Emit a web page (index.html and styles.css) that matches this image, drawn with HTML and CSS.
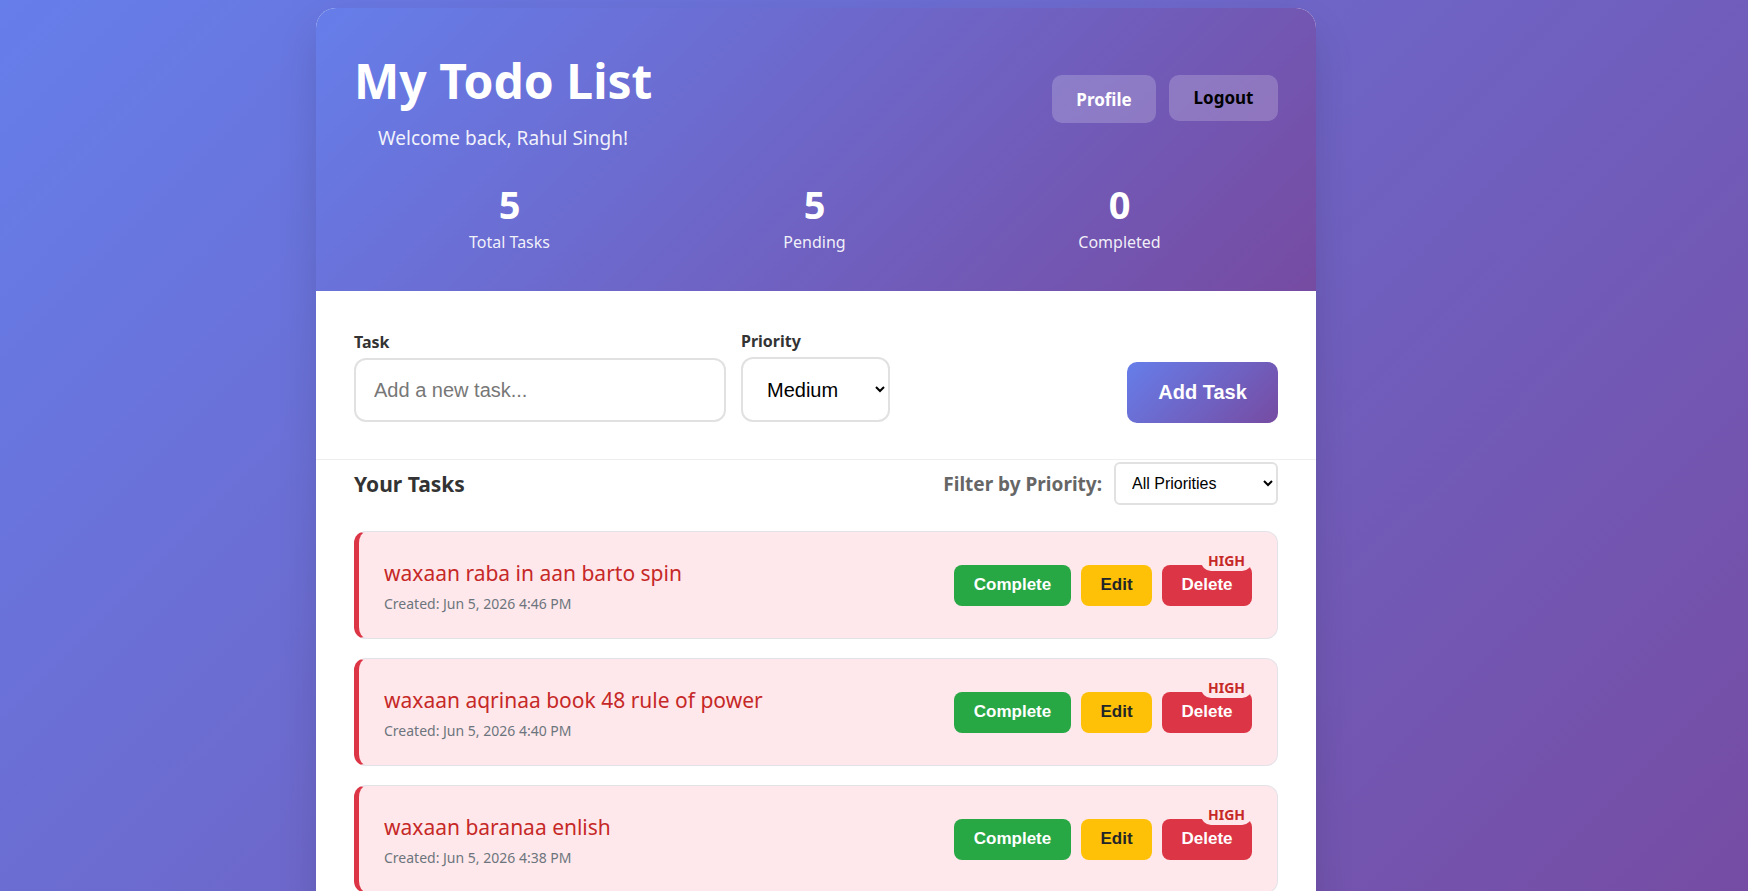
FILE: index.html
```html
<!DOCTYPE html>
<html lang="en">
<head>
    <meta charset="UTF-8">
    <meta name="viewport" content="width=device-width, initial-scale=1.0">
    <title>My Todo List</title>
    <link rel="stylesheet" href="styles.css">
</head>
<body>
    <div class="container">
        <header class="header">
            <div class="header-top">
                <div class="title-block">
                    <h1>My Todo List</h1>
                    <p class="welcome">Welcome back, Rahul Singh!</p>
                </div>
                <div class="header-actions">
                    <a href="#" class="profile-btn">Profile</a>
                    <button class="logout-btn">Logout</button>
                </div>
            </div>
            <div class="stats">
                <div class="stat">
                    <div class="stat-number">5</div>
                    <div class="stat-label">Total Tasks</div>
                </div>
                <div class="stat">
                    <div class="stat-number">5</div>
                    <div class="stat-label">Pending</div>
                </div>
                <div class="stat">
                    <div class="stat-number">0</div>
                    <div class="stat-label">Completed</div>
                </div>
            </div>
        </header>

        <form class="add-form" onsubmit="event.preventDefault();">
            <div class="form-group task-group">
                <label for="taskInput">Task</label>
                <input type="text" id="taskInput" placeholder="Add a new task...">
            </div>
            <div class="form-group">
                <label for="prioritySelect">Priority</label>
                <select id="prioritySelect" class="priority-select">
                    <option value="low">Low</option>
                    <option value="medium" selected>Medium</option>
                    <option value="high">High</option>
                </select>
            </div>
            <button type="submit" class="add-btn">Add Task</button>
        </form>

        <section class="tasks-section">
            <div class="tasks-header">
                <h2>Your Tasks</h2>
                <div class="filter">
                    <label for="filterSelect">Filter by Priority:</label>
                    <select id="filterSelect" class="filter-select">
                        <option value="all">All Priorities</option>
                        <option value="high">High</option>
                        <option value="medium">Medium</option>
                        <option value="low">Low</option>
                    </select>
                </div>
            </div>

            <div class="task-item high">
                <span class="priority-badge">HIGH</span>
                <div class="task-info">
                    <div class="task-text">waxaan raba in aan barto spin</div>
                    <div class="task-date">Created: Jun 5, 2026 4:46 PM</div>
                </div>
                <div class="task-actions">
                    <button class="btn complete-btn">Complete</button>
                    <button class="btn edit-btn">Edit</button>
                    <button class="btn delete-btn">Delete</button>
                </div>
            </div>

            <div class="task-item high">
                <span class="priority-badge">HIGH</span>
                <div class="task-info">
                    <div class="task-text">waxaan aqrinaa book 48 rule of power</div>
                    <div class="task-date">Created: Jun 5, 2026 4:40 PM</div>
                </div>
                <div class="task-actions">
                    <button class="btn complete-btn">Complete</button>
                    <button class="btn edit-btn">Edit</button>
                    <button class="btn delete-btn">Delete</button>
                </div>
            </div>

            <div class="task-item high">
                <span class="priority-badge">HIGH</span>
                <div class="task-info">
                    <div class="task-text">waxaan baranaa enlish</div>
                    <div class="task-date">Created: Jun 5, 2026 4:38 PM</div>
                </div>
                <div class="task-actions">
                    <button class="btn complete-btn">Complete</button>
                    <button class="btn edit-btn">Edit</button>
                    <button class="btn delete-btn">Delete</button>
                </div>
            </div>
        </section>
    </div>
</body>
</html>
```

FILE: styles.css
```css
html {
    min-height: 100%;
    background: linear-gradient(135deg, #667eea 0%, #764ba2 100%);
}

body {
    font-family: "Noto Sans", "Open Sans", sans-serif;
    margin: 0;
    padding: 8px 0 0;
    color: #333;
}

.container {
    width: 1000px;
    margin-left: 316px;
    background-color: #fff;
    border-radius: 20px 20px 0 0;
    box-shadow: 0 20px 40px rgba(0, 0, 0, 0.12);
    overflow: hidden;
}

/* header */
.header {
    background: linear-gradient(135deg, #667eea 0%, #764ba2 100%);
    color: #fff;
    padding: 40px 38px 38px;
}

.header-top {
    display: flex;
    justify-content: space-between;
    align-items: flex-start;
}

.header h1 {
    margin: 4px 0 0;
    font-size: 48px;
    line-height: 1.2;
    font-weight: 700;
}

.welcome {
    margin: 15px 0 0 24px;
    font-size: 19px;
    color: rgba(255, 255, 255, 0.92);
}

.header-actions {
    display: flex;
    align-items: flex-start;
    gap: 13px;
    margin-top: 27px;
}

.profile-btn, .logout-btn {
    display: flex;
    align-items: center;
    justify-content: center;
    background-color: rgba(255, 255, 255, 0.2);
    border: none;
    border-radius: 10px;
    font-family: "Noto Sans", sans-serif;
    font-size: 17px;
    font-weight: 700;
    text-decoration: none;
    cursor: pointer;
}

.profile-btn {
    color: #fff;
    width: 104px;
    height: 48px;
}

.logout-btn {
    color: #000;
    width: 109px;
    height: 46px;
    padding-bottom: 3px;
}

.stats {
    display: grid;
    grid-template-columns: repeat(3, 1fr);
    margin-top: 31px;
    padding: 0 6px 0 3px;
    text-align: center;
}

.stat-number {
    font-size: 38px;
    font-weight: 700;
    line-height: 1.2;
}

.stat-label {
    margin-top: 4px;
    font-size: 16px;
    color: rgba(255, 255, 255, 0.92);
}

/* add form */
.add-form {
    display: flex;
    align-items: flex-end;
    gap: 15px;
    padding: 39px 38px 37px;
    border-bottom: 1px solid #eee;
}

.form-group label {
    display: block;
    margin-bottom: 5px;
    font-size: 16px;
    font-weight: 700;
    color: #333;
}

.task-group {
    width: 372px;
}

.form-group input {
    width: 100%;
    height: 64px;
    padding: 0 18px;
    border: 2px solid #e1e1e1;
    border-radius: 12px;
    font-family: "Liberation Sans", Arial, sans-serif;
    font-size: 20px;
    box-sizing: border-box;
}

.form-group input::placeholder {
    color: #777;
}

.priority-select {
    width: 149px;
    height: 65px;
    padding: 0 12px 0 20px;
    border: 2px solid #e1e1e1;
    border-radius: 12px;
    background-color: #fff;
    font-family: "Liberation Sans", Arial, sans-serif;
    font-size: 20px;
    color: #000;
}

.add-btn {
    margin-left: auto;
    width: 151px;
    height: 61px;
    margin-bottom: -1px;
    background: linear-gradient(135deg, #667eea 0%, #764ba2 100%);
    color: #fff;
    border: none;
    border-radius: 10px;
    font-family: "Liberation Sans", Arial, sans-serif;
    font-size: 20px;
    font-weight: 700;
    cursor: pointer;
}

/* task list */
.tasks-section {
    padding: 2px 38px 38px;
}

.tasks-header {
    display: flex;
    justify-content: space-between;
    align-items: center;
    margin-bottom: 26px;
}

.tasks-header h2 {
    margin: 0;
    font-size: 21px;
    font-weight: 700;
    color: #333;
}

.filter {
    display: flex;
    align-items: center;
    gap: 12px;
}

.filter label {
    font-size: 19px;
    font-weight: 700;
    color: #666;
}

.filter-select {
    width: 164px;
    height: 43px;
    padding: 0 10px 0 12px;
    border: 2px solid #e1e1e1;
    border-radius: 6px;
    background-color: #fff;
    font-family: "Liberation Sans", Arial, sans-serif;
    font-size: 16px;
    color: #000;
}

.task-item {
    position: relative;
    display: flex;
    justify-content: space-between;
    align-items: center;
    height: 108px;
    margin-bottom: 19px;
    padding: 0 25px 0 25px;
    border: 1px solid #e2e2e8;
    border-left: 5px solid #dc3545;
    border-radius: 12px;
    background-color: #ffe8eb;
    box-sizing: border-box;
}

.task-info {
    padding-top: 1px;
}

.task-text {
    font-size: 21px;
    line-height: 28px;
    color: #c62828;
}

.task-date {
    margin-top: 7px;
    font-size: 14px;
    line-height: 19px;
    color: #6c757d;
}

.task-actions {
    display: flex;
    gap: 10px;
}

.btn {
    height: 41px;
    padding: 0 19px;
    border: none;
    border-radius: 8px;
    font-family: "Liberation Sans", Arial, sans-serif;
    font-size: 17px;
    font-weight: 700;
    cursor: pointer;
}

.complete-btn {
    width: 117px;
    background-color: #28a745;
    color: #fff;
}

.edit-btn {
    width: 71px;
    background-color: #ffc107;
    color: #212529;
}

.delete-btn {
    width: 90px;
    background-color: #dc3545;
    color: #fff;
}

.priority-badge {
    position: absolute;
    top: 18px;
    right: 25px;
    padding: 2px 7px;
    border-radius: 10px;
    background-color: #ffe8eb;
    font-size: 14px;
    line-height: 17px;
    font-weight: 700;
    color: #c62828;
}
```
